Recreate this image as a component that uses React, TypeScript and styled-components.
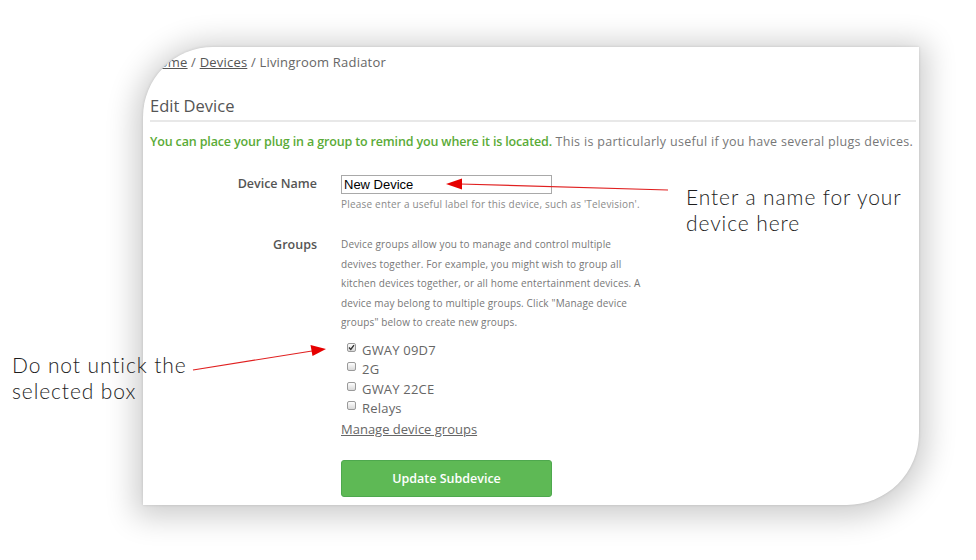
import React from 'react';
import styled, { createGlobalStyle } from 'styled-components';

const GlobalStyle = createGlobalStyle`
  html, body {
    margin: 0;
    padding: 0;
    background: #ffffff;
  }
  * {
    box-sizing: border-box;
  }
`;

const Stage = styled.div`
  position: relative;
  width: 976px;
  height: 560px;
  padding: 47px 57px 55px 143px;
  overflow: hidden;
  font-family: 'Open Sans', 'DejaVu Sans', sans-serif;
`;

const Card = styled.div`
  height: 458px;
  background: #ffffff;
  border-radius: 70px 0 72px 0;
  overflow: hidden;
  padding: 7px 3px 0 7px;
  box-shadow: 0 4px 30px 8px rgba(0, 0, 0, 0.2), 0 0 3px rgba(0, 0, 0, 0.14);
`;

const Breadcrumb = styled.div`
  font-size: 13px;
  line-height: 16px;
  letter-spacing: 0.2px;
  color: #666;

  a {
    color: #555;
    text-decoration: underline;
  }
`;

const Heading = styled.h2`
  margin: 25px 0 0;
  padding-bottom: 3px;
  font-size: 16.5px;
  line-height: 22px;
  font-weight: 500;
  color: #555;
  border-bottom: 2px solid #e8e8e8;
`;

const Intro = styled.p`
  margin: 11px 0 0;
  font-size: 12.5px;
  line-height: 18px;
  color: #777;
  white-space: nowrap;
  letter-spacing: 0.3px;
`;

const Lead = styled.strong`
  color: #5aab37;
  font-weight: 600;
  letter-spacing: -0.15px;
`;

const FormRow = styled.div<{ $top: number }>`
  display: grid;
  grid-template-columns: 167px 1fr;
  column-gap: 24px;
  margin-top: ${(p) => p.$top}px;
`;

const Label = styled.label<{ $lh: number }>`
  text-align: right;
  font-size: 12.5px;
  font-weight: 600;
  line-height: ${(p) => p.$lh}px;
  color: #555;
`;

const Field = styled.div`
  display: flex;
  flex-direction: column;
  align-items: flex-start;
`;

const TextInput = styled.input`
  width: 211px;
  height: 19px;
  padding: 0 2px;
  border: 1px solid #a9a9a9;
  font-family: 'Liberation Sans', Arial, sans-serif;
  font-size: 13px;
  color: #000;
  outline: none;
`;

const Help = styled.div`
  margin-top: 3px;
  font-size: 10px;
  line-height: 14px;
  letter-spacing: 0.2px;
  color: #8a8a8a;
  white-space: nowrap;
`;

const Description = styled.p`
  margin: 0;
  font-size: 10px;
  line-height: 19.5px;
  letter-spacing: 0.15px;
  color: #777;
  white-space: nowrap;
`;

const GroupList = styled.div`
  margin-top: 8px;
  display: flex;
  flex-direction: column;
`;

const GroupItem = styled.label`
  display: flex;
  align-items: flex-start;
  gap: 6px;
  padding-left: 6px;
  font-size: 13px;
  line-height: 19.5px;
  letter-spacing: 0.2px;
  color: #666;
`;

const Box = styled.span`
  display: inline-flex;
  align-items: center;
  justify-content: center;
  width: 9px;
  height: 9px;
  margin-top: 2px;
  border: 1px solid #9a9a9a;
  border-radius: 2px;
  background: linear-gradient(#fdfdfd, #d9d9d9);
`;

const ManageLink = styled.a`
  font-size: 13px;
  line-height: 20px;
  color: #666;
  text-decoration: underline;
`;

const SubmitButton = styled.button`
  margin-top: 21px;
  width: 211px;
  height: 37px;
  border: 1px solid #4ea84e;
  border-radius: 3px;
  background: #5eb955;
  color: #fff;
  font-family: 'Open Sans', sans-serif;
  font-size: 12.5px;
  font-weight: 600;
`;

const Note = styled.div<{ $left: number; $top: number }>`
  position: absolute;
  left: ${(p) => p.$left}px;
  top: ${(p) => p.$top}px;
  font-family: 'Lato', 'Open Sans', sans-serif;
  font-weight: 300;
  font-size: 21px;
  line-height: 26px;
  letter-spacing: 0.9px;
  color: #1e1e1e;
  white-space: nowrap;
`;

const ArrowLayer = styled.svg`
  position: absolute;
  left: 0;
  top: 0;
  pointer-events: none;
`;

const groups = [
  { name: 'GWAY 09D7', checked: true },
  { name: '2G', checked: false },
  { name: 'GWAY 22CE', checked: false },
  { name: 'Relays', checked: false },
];

const descriptionLines = [
  'Device groups allow you to manage and control multiple',
  'devives together. For example, you might wish to group all',
  'kitchen devices together, or all home entertainment devices. A',
  'device may belong to multiple groups. Click "Manage device',
  'groups" below to create new groups.',
];

const Check = () => (
  <svg width="7" height="7" viewBox="0 0 7 7">
    <path d="M1 3.6 L2.8 5.4 L6 1.2" fill="none" stroke="#333" strokeWidth="1.4" />
  </svg>
);

export default function App() {
  return (
    <>
      <GlobalStyle />
      <Stage>
        <Card>
          <Breadcrumb>
            <a>Home</a> / <a>Devices</a> / Livingroom Radiator
          </Breadcrumb>
          <Heading>Edit Device</Heading>
          <Intro>
            <Lead>You can place your plug in a group to remind you where it is located.</Lead> This is
            particularly useful if you have several plugs devices.
          </Intro>

          <FormRow $top={24}>
            <Label $lh={17}>Device Name</Label>
            <Field>
              <TextInput defaultValue="New Device" />
              <Help>Please enter a useful label for this device, such as 'Television'.</Help>
            </Field>
          </FormRow>

          <FormRow $top={24}>
            <Label $lh={19.5}>Groups</Label>
            <Field>
              <Description>
                {descriptionLines.map((line, i) => (
                  <React.Fragment key={i}>
                    {line}
                    {i < descriptionLines.length - 1 && <br />}
                  </React.Fragment>
                ))}
              </Description>
              <GroupList>
                {groups.map((g) => (
                  <GroupItem key={g.name}>
                    <Box>{g.checked && <Check />}</Box>
                    {g.name}
                  </GroupItem>
                ))}
              </GroupList>
              <ManageLink>Manage device groups</ManageLink>
              <SubmitButton>Update Subdevice</SubmitButton>
            </Field>
          </FormRow>
        </Card>

        <Note $left={686} $top={184}>
          Enter a name for your
          <br />
          device here
        </Note>
        <Note $left={12} $top={352}>
          Do not untick the
          <br />
          selected box
        </Note>

        <ArrowLayer width="976" height="560" viewBox="0 0 976 560">
          <line x1="668" y1="190" x2="460" y2="184" stroke="#e02020" strokeWidth="1.2" />
          <polygon points="446,184 462,178.5 462,189.5" fill="#e60000" />
          <line x1="193" y1="370" x2="312" y2="351" stroke="#e02020" strokeWidth="1.2" />
          <polygon points="326,349 310.5,345 312.5,356" fill="#e60000" />
        </ArrowLayer>
      </Stage>
    </>
  );
}
